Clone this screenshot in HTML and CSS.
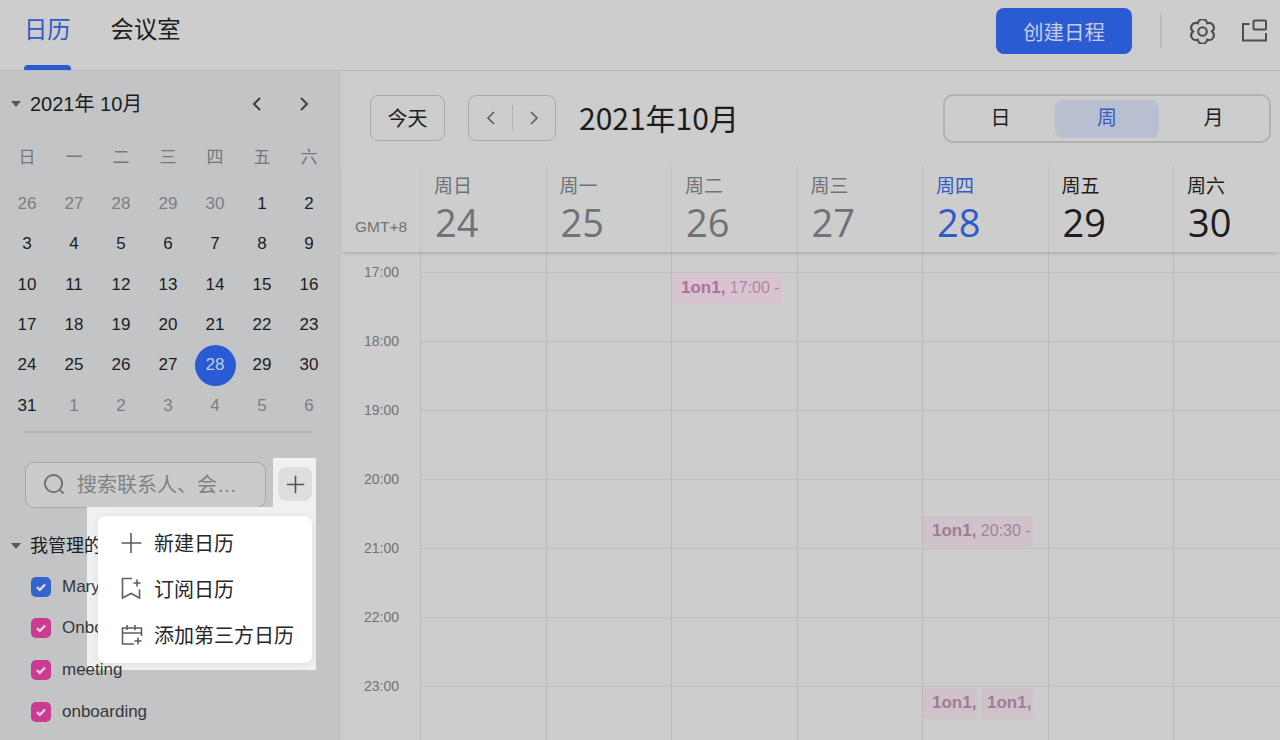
FILE: index.html
```html
<!DOCTYPE html>
<html lang="zh-CN">
<head>
    <meta charset="UTF-8">
    <meta name="viewport" content="width=device-width, initial-scale=1.0">
    <title>日历</title>
    <link rel="stylesheet" href="styles.css">
</head>
<body>
    <div class="app">
        <!-- Top bar -->
        <header class="topbar">
            <nav class="tabs">
                <a class="tab tab-active">日历</a>
                <a class="tab">会议室</a>
            </nav>
            <div class="top-actions">
                <button class="create-btn">创建日程</button>
                <span class="top-divider"></span>
                <svg class="top-icon" viewBox="2 2 20 20"><path d="M8.25 5.5C9 1 15 1 15.75 5.5C20.03 3.9 23.03 9.1 19.5 12C23.03 14.9 20.03 20.1 15.75 18.5C15 23 9 23 8.25 18.5C3.97 20.1 .97 14.9 4.5 12C.97 9.1 3.97 3.9 8.25 5.5Z"/><circle cx="12" cy="12" r="3.4"/></svg>
                <svg class="top-icon window-icon" viewBox="0 0 26 24"><path d="M8 5H1.5V21.5H24.5V14"/><rect x="12" y="1.5" width="12.5" height="9" rx="1"/></svg>
            </div>
        </header>

        <div class="content">
            <!-- Left column -->
            <aside class="sidebar">
                <div class="month-head">
                    <span class="caret"></span>
                    <span class="month-title">2021年 10月</span>
                    <svg class="month-arrow arrow-prev" viewBox="0 0 12 16"><path d="M9 2L3 8L9 14"/></svg>
                    <svg class="month-arrow" viewBox="0 0 12 16"><path d="M3 2L9 8L3 14"/></svg>
                </div>

                <div class="mini-cal">
                    <span class="wd">日</span><span class="wd">一</span><span class="wd">二</span><span class="wd">三</span><span class="wd">四</span><span class="wd">五</span><span class="wd">六</span>
                    <span class="off">26</span><span class="off">27</span><span class="off">28</span><span class="off">29</span><span class="off">30</span><span>1</span><span>2</span>
                    <span>3</span><span>4</span><span>5</span><span>6</span><span>7</span><span>8</span><span>9</span>
                    <span>10</span><span>11</span><span>12</span><span>13</span><span>14</span><span>15</span><span>16</span>
                    <span>17</span><span>18</span><span>19</span><span>20</span><span>21</span><span>22</span><span>23</span>
                    <span>24</span><span>25</span><span>26</span><span>27</span><span class="today"><b>28</b></span><span>29</span><span>30</span>
                    <span>31</span><span class="off">1</span><span class="off">2</span><span class="off">3</span><span class="off">4</span><span class="off">5</span><span class="off">6</span>
                </div>

                <div class="side-divider"></div>

                <div class="search">
                    <svg class="search-icon" viewBox="0 0 24 24"><circle cx="11" cy="11" r="9"/><path d="M18 18L21.5 21.5"/></svg>
                    <span class="search-text">搜索联系人、会…</span>
                </div>

                <div class="cal-head">
                    <span class="caret"></span>
                    <span class="cal-title">我管理的日历</span>
                </div>
                <ul class="cal-list">
                    <li><span class="check check-blue"><svg viewBox="0 0 12 12"><path d="M2.5 6.2L5 8.5L9.5 3.8"/></svg></span>Mary Zhang</li>
                    <li><span class="check"><svg viewBox="0 0 12 12"><path d="M2.5 6.2L5 8.5L9.5 3.8"/></svg></span>Onboarding</li>
                    <li><span class="check"><svg viewBox="0 0 12 12"><path d="M2.5 6.2L5 8.5L9.5 3.8"/></svg></span>meeting</li>
                    <li><span class="check"><svg viewBox="0 0 12 12"><path d="M2.5 6.2L5 8.5L9.5 3.8"/></svg></span>onboarding</li>
                </ul>
            </aside>

            <!-- Week view -->
            <main class="main">
                <div class="toolbar">
                    <button class="tool-btn today-btn">今天</button>
                    <div class="tool-btn nav-btn">
                        <svg viewBox="0 0 12 16"><path d="M9 2L3 8L9 14"/></svg>
                        <span class="nav-sep"></span>
                        <svg viewBox="0 0 12 16"><path d="M3 2L9 8L3 14"/></svg>
                    </div>
                    <h1 class="week-title">2021年10月</h1>
                    <div class="segment">
                        <span class="seg-item">日</span>
                        <span class="seg-item seg-active">周</span>
                        <span class="seg-item">月</span>
                    </div>
                </div>

                <div class="week-head">
                    <div class="gmt">GMT+8</div>
                    <div class="day-head past"><span>周日</span><strong>24</strong></div>
                    <div class="day-head past"><span>周一</span><strong>25</strong></div>
                    <div class="day-head past"><span>周二</span><strong>26</strong></div>
                    <div class="day-head past"><span>周三</span><strong>27</strong></div>
                    <div class="day-head current"><span>周四</span><strong>28</strong></div>
                    <div class="day-head"><span>周五</span><strong>29</strong></div>
                    <div class="day-head"><span>周六</span><strong>30</strong></div>
                </div>

                <div class="week-body">
                    <div class="hours">
                        <span>17:00</span><span>18:00</span><span>19:00</span><span>20:00</span><span>21:00</span><span>22:00</span><span>23:00</span>
                    </div>
                    <div class="day-col"></div>
                    <div class="day-col"></div>
                    <div class="day-col">
                        <div class="event event-a"><b>1on1,</b> 17:00 -</div>
                    </div>
                    <div class="day-col"></div>
                    <div class="day-col">
                        <div class="event event-b"><b>1on1,</b> 20:30 -</div>
                        <div class="event event-c"><b>1on1,</b></div>
                        <div class="event event-d"><b>1on1,</b></div>
                    </div>
                    <div class="day-col"></div>
                    <div class="day-col"></div>
                </div>
            </main>
        </div>

        <!-- Guide highlight with the add menu, over the dimmed page -->
        <div class="add-popover">
            <div class="spot-btn">
                <button class="add-btn"><svg viewBox="0 0 24 24"><path d="M12 2V22M2 12H22"/></svg></button>
            </div>
            <div class="spot-menu">
                <ul class="menu">
                    <li><svg viewBox="0 0 22 22"><path d="M10 2V22M0.5 12H20.5"/></svg>新建日历</li>
                    <li><svg viewBox="0 0 22 22"><path d="M11 1.5H1.5V21L10 16.5L18.5 21V12.5M16 2.5V9.5M12.5 6H19.5"/></svg>订阅日历</li>
                    <li><svg viewBox="0 0 22 22"><path d="M13 21H1.5V5H20.5V13M1.5 10H20.5M6 2V7M14 2V7M17 14.5V21.5M13.5 18H20.5"/></svg>添加第三方日历</li>
                </ul>
            </div>
        </div>
    </div>
</body>
</html>
```

FILE: styles.css
```css
* {
    box-sizing: border-box;
}
body {
    margin: 0;
    font-family: "Liberation Sans", "Noto Sans CJK SC", sans-serif;
    color: #1b1d20;
    background-color: #cdcdcd;
}
svg {
    fill: none;
    stroke: currentColor;
    display: block;
}
button {
    font-family: inherit;
}
.app {
    position: relative;
    width: 1280px;
    height: 740px;
    overflow: hidden;
    display: flex;
    flex-direction: column;
}

/* top bar */
.topbar {
    height: 71px;
    flex: none;
    display: flex;
    justify-content: space-between;
    padding: 0 12px 0 24px;
    border-bottom: 1px solid #b9babb;
}
.tabs {
    display: flex;
    gap: 40px;
}
.tab {
    height: 70px;
    padding-top: 13px;
    font-size: 23.3px;
    line-height: 34px;
    position: relative;
}
.tab-active {
    color: #2f5bc9;
}
.tab-active::after {
    content: "";
    position: absolute;
    left: 0;
    right: 0;
    bottom: 0;
    height: 5px;
    border-radius: 4px 4px 0 0;
    background-color: #2b5bd2;
}
.top-actions {
    display: flex;
    align-items: flex-start;
    padding-top: 8px;
}
.create-btn {
    width: 136px;
    height: 46px;
    border: none;
    border-radius: 8px;
    background-color: #2b5bd2;
    color: #c3cde2;
    font-size: 20.5px;
}
.top-divider {
    width: 2px;
    height: 34px;
    margin: 6px 28px 0 28px;
    background-color: #bcbcbc;
}
.top-icon {
    width: 25px;
    height: 25px;
    margin-top: 11px;
    color: #4c4f53;
    stroke-width: 1.7;
}
.window-icon {
    width: 27px;
    height: 24px;
    margin-left: 26px;
    stroke-width: 2;
}

.content {
    flex: 1;
    display: flex;
    min-height: 0;
}

/* left column */
.sidebar {
    width: 341px;
    flex: none;
    background-color: #c3c4c6;
    padding-top: 20px;
}
.month-head {
    display: flex;
    align-items: center;
    height: 26px;
    padding-left: 11px;
    font-size: 20px;
}
.caret {
    width: 0;
    height: 0;
    border-left: 5px solid transparent;
    border-right: 5px solid transparent;
    border-top: 6px solid #55585c;
    margin-right: 9px;
    flex: none;
}
.month-title {
    flex: 1;
    padding-bottom: 4px;
}
.month-arrow {
    width: 12px;
    height: 16px;
    margin-right: 31px;
    stroke-width: 2;
    color: #3d4043;
}
.arrow-prev {
    margin-right: 35px;
}
.mini-cal {
    display: grid;
    grid-template-columns: repeat(7, 47px);
    grid-template-rows: 51.6px repeat(6, 40.4px);
    margin: 15px 0 0 3.5px;
    font-size: 17px;
}
.mini-cal span {
    display: flex;
    align-items: center;
    justify-content: center;
}
.mini-cal .wd {
    color: #75787b;
    font-size: 17px;
    padding-bottom: 4px;
}
.mini-cal .off {
    color: #7b7e82;
}
.today b {
    width: 41px;
    height: 41px;
    border-radius: 50%;
    background-color: #2b5bd2;
    color: #c3cde2;
    font-weight: normal;
    display: flex;
    align-items: center;
    justify-content: center;
}
.side-divider {
    height: 2px;
    margin: 5px 29px 0 24px;
    background-color: #b3b4b6;
}
.search {
    width: 241px;
    height: 46px;
    margin: 29px 0 0 25px;
    border: 1.5px solid #a6a8aa;
    border-radius: 9px;
    background-color: #cbcbcb;
    display: flex;
    align-items: center;
    padding-left: 17px;
    color: #808285;
}
.search-icon {
    width: 23px;
    height: 23px;
    stroke-width: 2;
    color: #6d7073;
    flex: none;
}
.search-text {
    margin-left: 11px;
    padding-bottom: 2px;
    font-size: 20px;
    white-space: nowrap;
}
/* these two stay readable on top of the highlight, below the menu */
.cal-head,
.cal-list {
    position: relative;
    z-index: 1;
}
.cal-head {
    display: flex;
    align-items: center;
    height: 26px;
    margin-top: 25px;
    padding-left: 11px;
    font-size: 18px;
    white-space: nowrap;
}
.cal-title {
    padding-bottom: 4px;
}
.cal-list {
    list-style: none;
    margin: 7px 0 0 0;
    padding: 0 0 0 31px;
    font-size: 17px;
    color: #35373a;
}
.cal-list li {
    height: 41.7px;
    display: flex;
    align-items: center;
    white-space: nowrap;
}
.check {
    width: 20px;
    height: 20px;
    margin-right: 11px;
    border-radius: 5px;
    background-color: #cc3a92;
    color: #e6d3e0;
    display: flex;
    align-items: center;
    justify-content: center;
}
.check-blue {
    background-color: #3564cf;
}
.check svg {
    width: 14px;
    height: 14px;
    stroke-width: 2;
}

/* week view */
.main {
    flex: 1;
    min-width: 0;
    display: flex;
    flex-direction: column;
}
.toolbar {
    height: 94px;
    flex: none;
    display: flex;
    align-items: flex-start;
    padding: 24px 9px 0 29px;
}
.tool-btn {
    height: 46px;
    border: 1.5px solid #a8a9aa;
    border-radius: 8px;
    background-color: transparent;
    color: #1b1d20;
}
.today-btn {
    width: 75px;
    font-size: 20px;
    margin-right: 23px;
    padding-bottom: 3px;
}
.nav-btn {
    width: 88px;
    display: flex;
    align-items: center;
    justify-content: center;
    color: #55585c;
}
.nav-btn svg {
    width: 12px;
    height: 16px;
    stroke-width: 1.5;
}
.nav-sep {
    width: 1px;
    height: 26px;
    margin: 0 15px;
    background-color: #b0b1b2;
}
.week-title {
    flex: 1;
    margin: -2px 0 0 23px;
    font-family: "Noto Sans CJK SC", sans-serif;
    font-size: 30px;
    font-weight: 400;
    line-height: 48px;
}
.segment {
    width: 328px;
    height: 49px;
    margin-top: -1px;
    border: 2px solid #b0b1b2;
    border-radius: 10px;
    display: flex;
    align-items: center;
    gap: 2.5px;
    padding: 0 0 0 3.5px;
}
.seg-item {
    width: 104px;
    height: 38px;
    line-height: 36px;
    text-align: center;
    font-size: 20px;
    border-radius: 8px;
}
.seg-active {
    background-color: #b8bfd1;
    color: #345fc4;
}
.week-head,
.week-body {
    display: grid;
    grid-template-columns: 79px repeat(7, 125.5px);
}
.week-head {
    height: 87px;
    flex: none;
    position: relative;
    z-index: 1;
    box-shadow: 0 3px 4px -2px rgba(0, 0, 0, 0.2);
    background-color: #cdcdcd;
}
.gmt {
    padding: 52px 0 0 14px;
    font-size: 15.5px;
    line-height: 20px;
    color: #707376;
}
.day-head {
    border-left: 1px solid #c0c0c1;
    padding: 10px 0 0 13px;
    color: #1b1d20;
}
.day-head span {
    display: block;
    font-size: 19px;
    line-height: 24px;
}
.day-head strong {
    display: block;
    margin-left: 1px;
    font-family: "Open Sans", sans-serif;
    font-size: 38px;
    font-weight: 400;
    line-height: 46px;
}
.day-head.past {
    color: #707376;
}
.day-head.current {
    color: #2f5bc9;
}
.week-body {
    flex: 1;
    min-height: 0;
}
.hours {
    padding-top: 10px;
    font-size: 14px;
    color: #707376;
}
.hours span {
    display: block;
    height: 69px;
    line-height: 20px;
    padding-left: 23px;
}
.day-col {
    position: relative;
    border-left: 1px solid #bababb;
    background-image: linear-gradient(to bottom, #bfbfc0 1px, transparent 1px);
    background-size: 100% 69px;
    background-position: 0 20px;
}

/* events sit on top of the hour lines */
.event {
    position: absolute;
    height: 31px;
    padding-left: 9px;
    border-radius: 3px;
    background-color: #cfc2cb;
    color: #a3829a;
    font-size: 16px;
    line-height: 30px;
    white-space: nowrap;
    overflow: hidden;
}
.event b {
    color: #a07c96;
    font-size: 17px;
}
.event-a {
    left: 0;
    top: 21px;
    width: 110px;
    background-color: #d7c4d0;
    color: #b285a3;
}
.event-a b {
    color: #b0719b;
}
.event-b {
    left: 0;
    top: 264px;
    width: 110px;
}
.event-c {
    left: 0;
    top: 436px;
    width: 55px;
}
.event-d {
    left: 58px;
    top: 436px;
    width: 52px;
    padding-left: 6px;
}

/* guide highlight */
.add-popover {
    position: absolute;
    left: 87px;
    top: 458px;
    width: 229px;
    display: flex;
    flex-direction: column;
    align-items: flex-end;
}
.spot-btn {
    width: 43px;
    height: 49px;
    padding: 9px 0 0 5px;
    background-color: #eff0f2;
}
.add-btn {
    width: 34px;
    height: 34px;
    padding: 0;
    border: none;
    border-radius: 8px;
    background-color: #dcdee0;
    color: #4f5357;
    display: flex;
    align-items: center;
    justify-content: center;
}
.add-btn svg {
    width: 21px;
    height: 21px;
    stroke-width: 1.8;
}
.spot-menu {
    width: 229px;
    height: 163px;
    padding: 9px 4px 7px 11px;
    background-color: #eff0f2;
}
.menu {
    position: relative;
    z-index: 2;
    list-style: none;
    margin: 0;
    padding: 3px 0;
    height: 147px;
    background-color: #fff;
    border-radius: 8px;
    box-shadow: 0 2px 8px rgba(0, 0, 0, 0.07);
    font-size: 20px;
    color: #25272a;
}
.menu li {
    height: 46px;
    display: flex;
    align-items: center;
    padding-left: 23px;
    white-space: nowrap;
}
.menu svg {
    width: 22px;
    height: 22px;
    margin-right: 11px;
    stroke-width: 1.6;
    color: #5b5e62;
    flex: none;
    overflow: visible;
}
```
